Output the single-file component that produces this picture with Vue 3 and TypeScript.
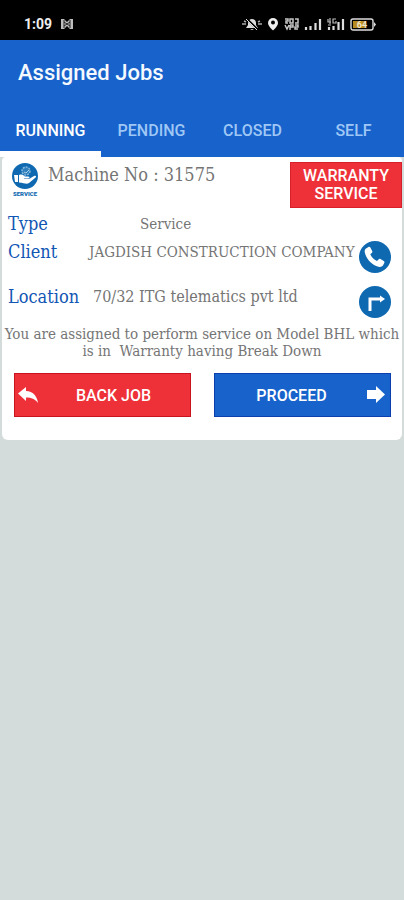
<script setup lang="ts">
import { ref } from 'vue'

const tabs: string[] = ['RUNNING', 'PENDING', 'CLOSED', 'SELF']
const active = ref('RUNNING')
</script>

<template>
  <div class="screen">
    <div class="status">
      <span class="clock">1:09</span>
      <svg class="mail" width="14" height="12" viewBox="0 0 14 12">
        <path d="M1 1h3l3 3 3-3h3v10h-3l-3-3-3 3H1z" fill="#bdbdbd" />
        <path d="M4 2v8M10 2v8M4 4l3 2 3-2M4 8l3-2 3 2" stroke="#222" fill="none" />
      </svg>
      <div class="system">
        <svg width="20" height="14" viewBox="0 0 20 14">
          <path d="M4 11l2-3V6c0-3 2-4 4-4s4 1 4 4v2l2 3zM8 12h4l-2 1z" fill="#ddd" />
          <path d="M0 7h4M16 7h4M2 4l2 1M18 4l-2 1" stroke="#aaa" stroke-width="1.4" />
          <path d="M5 2l11 11" stroke="#000" stroke-width="2" />
          <path d="M4 2l11 11" stroke="#ddd" />
        </svg>
        <svg width="12" height="14" viewBox="0 0 12 14">
          <path d="M6 1a5 5 0 0 0-5 5c0 3 5 7.500 5 7.500S11 9 11 6a5 5 0 0 0-5-5z" fill="#eee" />
          <circle cx="6" cy="5.500" r="2" fill="#000" />
        </svg>
        <svg width="15" height="14" viewBox="0 0 15 14">
          <path d="M1 2h3v2H2v2h2M6 2h3v4H6zM11 2h3v4h-3M1 8l2 4 2-4M6 8v5M6 8h3v2H6M11 8h3v2h-3v2h3" stroke="#c6c6c6" stroke-width="1.500" fill="none" />
        </svg>
        <svg width="18" height="14" viewBox="0 0 18 14">
          <path d="M2 13v-3M6.500 13V9M11.500 13V6M16 13V2" stroke="#ddd" stroke-width="2.200" />
        </svg>
        <svg width="18" height="14" viewBox="0 0 18 14">
          <path d="M2 13v-3M6.500 13V9M11.500 13V5M16 13V2" stroke="#ddd" stroke-width="2.200" />
          <path d="M1 2v3h3M3 1v6M9 2H6v4h3V4M1 8h3" stroke="#bbb" stroke-width="1.200" fill="none" />
        </svg>
        <svg width="26" height="14" viewBox="0 0 26 14">
          <rect x="1" y="2" width="22" height="11" rx="2" fill="none" stroke="#ddd" stroke-width="1.400" />
          <path d="M24 5l2 2.500-2 2.500z" fill="#ddd" />
          <rect x="3" y="4" width="12" height="7" fill="#b88a22" />
          <text x="12" y="11" text-anchor="middle" font-family="Roboto, sans-serif" font-size="9" font-weight="700" fill="#f2e6c8">64</text>
        </svg>
      </div>
    </div>

    <header class="bar">
      <h1>Assigned Jobs</h1>
      <nav class="tabs" role="tablist">
        <button
          v-for="tab in tabs"
          :key="tab"
          type="button"
          role="tab"
          class="tab"
          :class="{ on: tab === active }"
          :aria-selected="tab === active"
          @click="active = tab"
        >{{ tab }}</button>
      </nav>
    </header>

    <main class="card">
      <div class="head">
        <svg class="service" width="28" height="34" viewBox="0 0 28 34">
          <circle cx="14" cy="13" r="13" fill="#0e69b1" />
          <circle cx="15" cy="8" r="4" fill="#2f80bd" stroke="#83b7dc" stroke-width="1.500" stroke-dasharray="2 1" />
          <path d="M13 9l2 1 3-3" stroke="#a9cfe8" fill="none" />
          <path d="M3 12h4v7H4zM8 12c3-1 4 0 6 1.500h3c2 0 2 2 0 2h-4v.5h5l5-3c2-1 3 1 1 2l-6 5c-2 1.500-5 0-10-.5z" fill="#fff" />
          <text x="14" y="33" text-anchor="middle" font-family="Roboto, sans-serif" font-size="6" font-weight="900" fill="#0e69b1">SERVICE</text>
        </svg>
        <h2>Machine No : 31575</h2>
        <strong class="badge">WARRANTY SERVICE</strong>
      </div>

      <dl class="details">
        <div class="row">
          <dt>Type</dt>
          <dd class="kind">Service</dd>
        </div>
        <div class="row client">
          <dt>Client</dt>
          <dd>JAGDISH CONSTRUCTION COMPANY</dd>
          <button type="button" class="round" aria-label="Call client">
            <svg width="32" height="32" viewBox="0 0 32 32">
              <circle cx="16" cy="16" r="16" fill="#0e69b1" />
              <path d="M7 7.500l2.500-1.500c1-.5 1.500 0 2 .8l1.700 3.200c.4.800.2 1.400-.5 2l-1.400 1.200c1.500 3.200 3.500 5.300 6.700 6.900l1.500-1.700c.6-.7 1.200-.8 2-.4l3.200 1.900c.8.500 1 1.200.5 2L24 24.500c-1 1.200-2.500 1.700-4.500 1.200C12.500 24 7 17.500 5.700 11c-.2-1.500.3-2.700 1.300-3.500z" fill="#fff" />
            </svg>
          </button>
        </div>
        <div class="row location">
          <dt>Location</dt>
          <dd class="place">70/32 ITG telematics pvt ltd</dd>
          <button type="button" class="round" aria-label="Directions">
            <svg width="32" height="32" viewBox="0 0 32 32">
              <circle cx="16" cy="16" r="16" fill="#0e69b1" />
              <path d="M11 25V13h11" stroke="#fff" stroke-width="3" fill="none" />
              <path d="M21 9.500l5 3.500-5 3.500z" fill="#fff" />
            </svg>
          </button>
        </div>
      </dl>

      <p class="message">You are assigned to perform service on Model BHL which is in&nbsp; Warranty having Break Down</p>

      <div class="actions">
        <button type="button" class="action back">
          <svg width="22" height="20" viewBox="0 0 22 20">
            <path d="M0 8.500L8 2v4c7 .3 11 5 12 12-3-4-6.500-5.500-12-5.500V16z" fill="#fff" />
          </svg>
          <span>BACK JOB</span>
        </button>
        <button type="button" class="action next">
          <span>PROCEED</span>
          <svg width="22" height="20" viewBox="0 0 22 20">
            <path d="M2 5h9V1l9 8.500-9 8.500v-4H2z" fill="#fff" />
          </svg>
        </button>
      </div>
    </main>
  </div>
</template>

<style>
body {
  background: #d3dcda;
}
</style>

<style scoped>
.screen {
  min-height: 100vh;
  background: #d3dcda;
  font-family: Roboto, sans-serif;
}
button {
  border: 0;
  padding: 0;
  font-family: inherit;
  cursor: pointer;
}
svg {
  display: block;
  flex: none;
}
.status {
  display: flex;
  align-items: center;
  height: 40px;
  padding: 8px 28px 0 24px;
  box-sizing: border-box;
  background: #000;
  color: #eee;
}
.clock {
  font-size: 14px;
  font-weight: 700;
}
.mail {
  margin-left: 8px;
}
.system {
  display: flex;
  margin-left: auto;
  gap: 5px;
}
.bar {
  background: #1762cb;
}
h1 {
  margin: 0;
  padding: 17px 18px 15px;
  color: #f4f8ff;
  font-size: 22px;
  line-height: 32px;
  font-weight: 500;
}
.tabs {
  display: grid;
  grid-template-columns: repeat(4, 1fr);
}
.tab {
  height: 53px;
  padding-top: 6px;
  border-bottom: 6px solid transparent;
  background: none;
  color: #9fc7f5;
  font-size: 16px;
  font-weight: 500;
}
.tab.on {
  color: #fff;
  border-bottom-color: #fff;
}
.card {
  margin: 0 2px;
  padding-bottom: 23px;
  border-radius: 4px 4px 6px 6px;
  background: #fff;
  color: #757575;
  font-family: "DejaVu Serif Condensed", "DejaVu Serif", serif;
}
.head {
  display: flex;
  align-items: flex-start;
  padding: 5px 0 0 9px;
}
.service {
  margin-top: 1px;
}
h2 {
  flex: 1;
  margin: 1px 0 0 9px;
  font-size: 18px;
  line-height: 24px;
  font-weight: 400;
}
.badge {
  width: 112px;
  padding: 4px 12px;
  box-sizing: border-box;
  border: 1px solid #d8202a;
  background: #ee3038;
  color: #fff;
  font-family: Roboto, sans-serif;
  font-size: 16px;
  line-height: 18px;
  font-weight: 500;
  text-align: center;
}
.details {
  margin: 0;
  padding: 3px 11px 0 6px;
}
.row {
  display: flex;
  align-items: flex-start;
  height: 28px;
}
.row.client {
  height: 45px;
}
.row.location {
  height: 42px;
}
dt {
  width: 81px;
  color: #1156b4;
  font-size: 18px;
  line-height: 26px;
}
dd {
  flex: 1;
  margin: 0;
  font-size: 15px;
  line-height: 26px;
  white-space: nowrap;
}
.kind {
  padding-left: 51px;
}
.place {
  padding-left: 4px;
  font-size: 16px;
}
.round {
  margin-top: 2px;
  border-radius: 50%;
  background: none;
}
.message {
  margin: 0;
  padding: 0 2px;
  font-size: 15px;
  line-height: 17px;
  text-align: center;
}
.actions {
  display: grid;
  grid-template-columns: 1fr 1fr;
  gap: 23px;
  padding: 13px 11px 0 12px;
  font-family: Roboto, sans-serif;
}
.action {
  display: flex;
  align-items: center;
  height: 44px;
  padding: 0 3px;
  color: #fff;
  font-size: 16px;
  font-weight: 500;
}
.action span {
  flex: 1;
}
.back {
  border: 1px solid #c8141e;
  background: #ee3038;
}
.next {
  border: 1px solid #0c3fae;
  background: #1762cb;
}
</style>
